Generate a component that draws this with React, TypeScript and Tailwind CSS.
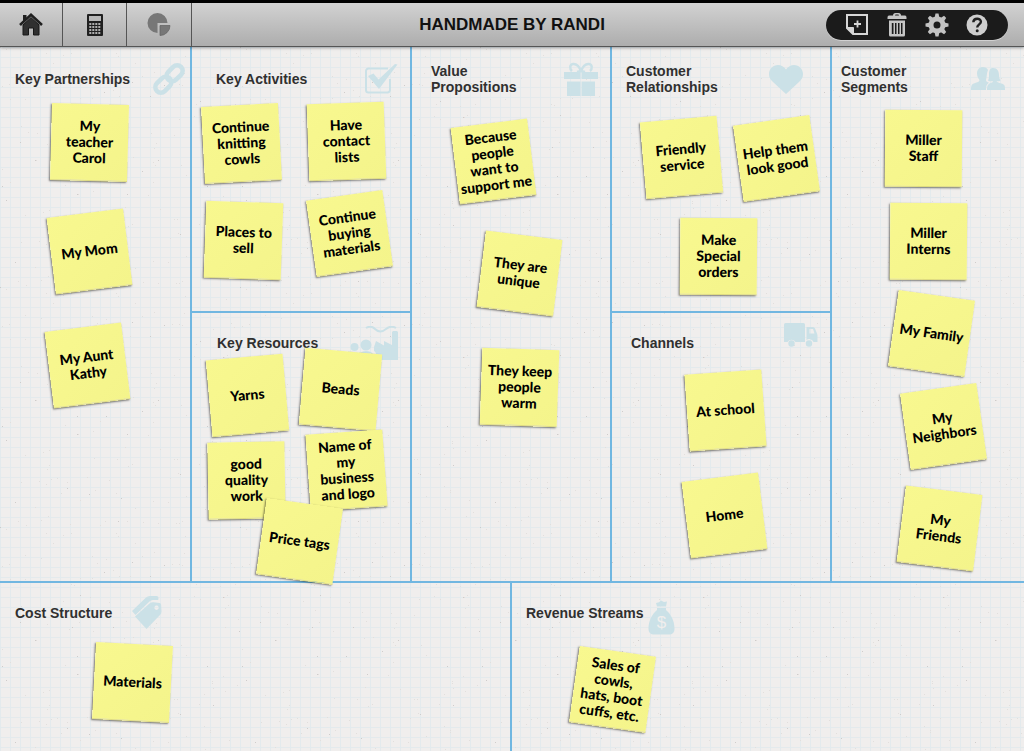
import type { ReactNode } from "react";

type Note = { text: string; x: number; y: number; rotate: number };

type Section = {
  title: string;
  className: string;
  headClass: string;
  icon: ReactNode;
  notes: Note[];
};

function LinkIcon() {
  return (
    <svg width="34" height="34" viewBox="0 0 34 34" fill="none" stroke="currentColor" strokeWidth="4.6">
      <g transform="rotate(-45 17 17)">
        <rect x="0" y="11.500" width="18" height="11" rx="5.500" />
        <rect x="16" y="11.500" width="18" height="11" rx="5.500" />
      </g>
    </svg>
  );
}

function CheckIcon() {
  return (
    <svg width="34" height="32" viewBox="0 0 34 32" fill="none">
      <path
        d="M24 5.500H4.500a2.500 2.500 0 0 0-2.500 2.500v19a2.500 2.500 0 0 0 2.500 2.500h19a2.500 2.500 0 0 0 2.500-2.500V16"
        stroke="currentColor"
        strokeWidth="2"
      />
      <path d="M4 13l5.500-2.500 5 6L31 1l2.500 .6L15 26z" fill="currentColor" />
    </svg>
  );
}

function GiftIcon() {
  return (
    <svg width="34" height="34" viewBox="0 0 34 34" fill="currentColor">
      <path d="M0 10h16.500v7H0zM17.500 10H34v7H17.500zM3 19.500h13.500V34H3zM17.500 19.500H31V34H17.500z" />
      <path
        d="M17 10C16 5 12.500 1.500 9 2C5.500 2.500 5.500 7 8 9M17 10C18 5 21.500 1.500 25 2C28.500 2.500 28.500 7 26 9M17 9l-4 1M17 9l4 1"
        fill="none"
        stroke="currentColor"
        strokeWidth="2.400"
      />
    </svg>
  );
}

function HeartIcon() {
  return (
    <svg width="34" height="29" viewBox="0 0 34 29" fill="currentColor">
      <path d="M17 4.500C15 1.500 12 0 9 0C4 0 0 4 0 9c0 3.500 1.500 5.500 4 8l13 12 13-12c2.500-2.500 4-4.500 4-8 0-5-4-9-9-9-3 0-6 1.500-8 4.500z" />
    </svg>
  );
}

function PeopleIcon() {
  return (
    <svg width="34" height="24" viewBox="0 0 34 24" fill="currentColor">
      <path d="M6 6.500C6 2.500 8.500 0 12 0c2.500 0 4 1 5 3-1.500 3-1 7-2 10 0 1.500 1.500 2 3 2.700-2.500 1.300-3 3.500-3 7.300H0c0-5 1-6 4-7 2-.7 4.500-1.200 4.500-3C7 11 6 9 6 6.500z" />
      <path d="M22 1c4.500 0 6 3.500 6 7 0 2.500.5 4 1.500 5.500-1 .8-2.500 1-4 .8.500 1.700 7 2 8 4.200.5 1.200.5 3 .5 4.500H16c0-6 2-6.500 5-7.500.7-.3 1-.7 1-1.200-2 .2-4 0-5-.8 1.200-2 1-4 1-6C18 3.500 19 1 22 1z" />
    </svg>
  );
}

function FactoryIcon() {
  return (
    <svg width="48" height="34" viewBox="0 0 48 34" fill="currentColor">
      <path d="M24 21l2-6 8 4.500V15l8 4V6l1-1h4l1 1v28H27c0-4-1-8-3-9z" />
      <circle cx="16" cy="19" r="5.500" />
      <circle cx="4.500" cy="21" r="4" />
      <path d="M0 34v-6c1-2 7-2.500 9-1l1 1c1-4 11-4 13 0 1.500 1.500 2 4 2 6z" />
      <path d="M16 2q5-3 9 1q5 5 11 0q5-4 10-1" fill="none" stroke="currentColor" strokeWidth="2" />
    </svg>
  );
}

function TruckIcon() {
  return (
    <svg width="34" height="24" viewBox="0 0 34 24" fill="currentColor">
      <path d="M1.500 0h18q1.500 0 1.500 1.500V19h-9.500a4.600 4.600 0 0 0-8 0H0V1.500Q0 0 1.500 0z" />
      <path
        fillRule="evenodd"
        d="M22.500 4H29q1.500 0 2 1.500l2 5q.5 1 .5 2.500v6h-4a4.600 4.600 0 0 0-7-2zM25.500 6v4.500H30.500L29 6z"
      />
      <circle cx="7.500" cy="20.500" r="3.200" />
      <circle cx="25" cy="20.500" r="3.200" />
    </svg>
  );
}

function TagsIcon() {
  return (
    <svg width="30" height="34" viewBox="0 0 30 34" fill="currentColor">
      <path d="M0 15L14 1.500Q15.500 0 18 0h6.500q2 0 2 2l-.3 2H21q-2 0-3.500 1.500L3.500 19z" />
      <path
        fillRule="evenodd"
        d="M3 20.500L17.500 7.500Q19.500 6 21.500 6.300l6 .7q1.500.2 1.600 1.500l.4 7q0 2-1.500 3.500L14.500 33zM24.500 9.500a2.200 2.200 0 1 0 .1 0z"
      />
    </svg>
  );
}

function MoneyBagIcon() {
  return (
    <svg width="27" height="35" viewBox="0 0 27 35" fill="currentColor">
      <path d="M8 3l3-.7L13 .5l3 1.500 3-.5-1 5H9z" />
      <path d="M9 8h9v2c5 4 8.500 11 8.500 18.500 0 4-2 6-6 6H6.500c-4 0-6-2-6-6C.5 21 4 14 9 10z" />
      <text
        x="13.500"
        y="28"
        textAnchor="middle"
        className="fill-[#f0eeed] font-['Liberation_Sans',sans-serif] text-[17px]"
      >
        $
      </text>
    </svg>
  );
}

function HomeIcon() {
  return (
    <svg width="24" height="23" viewBox="0 0 24 23">
      <path d="M4 12l8-7.500 8 7.500v10h-5.500v-7h-5v7H4z" fill="#303030" stroke="#181818" />
      <path d="M1 12L12 1.800 23 12" fill="none" stroke="#202020" strokeWidth="2.600" />
      <path d="M4 2h3.500v4L4 9z" fill="#202020" />
    </svg>
  );
}

function CalculatorIcon() {
  return (
    <svg width="16" height="22" viewBox="0 0 16 22">
      <rect width="16" height="22" rx="1" fill="#202020" />
      <rect x="2" y="2" width="12" height="5" fill="#b8b8b8" />
      {[9, 12, 15, 18].map((y) =>
        [2, 5, 8, 11].map((x) => (
          <rect key={`${x}-${y}`} x={x + 0.3} y={y} width="2" height="2" fill="#b0b0b0" />
        ))
      )}
    </svg>
  );
}

function PieIcon() {
  return (
    <svg width="24" height="23" viewBox="0 0 24 23" fill="#777">
      <path d="M10.500 0a10 10 0 1 0 0 20V10h10A10 10 0 0 0 10.500 0z" />
      <path d="M13 12.500h10a10 10 0 0 1-10 10z" stroke="#606060" strokeWidth=".7" />
    </svg>
  );
}

function AddNoteIcon() {
  return (
    <svg width="24" height="24" viewBox="0 0 24 24" fill="none" stroke="#d6d6d6">
      <path d="M2 2h20v19H8l-6-6z" strokeWidth="2" />
      <path d="M2 14.500h6.500V21z" fill="#d6d6d6" />
      <path d="M12.500 7.500v7M9 11h7" strokeWidth="1.800" />
    </svg>
  );
}

function TrashIcon() {
  return (
    <svg width="20" height="24" viewBox="0 0 20 24" fill="#c6c6c6">
      <path
        fillRule="evenodd"
        d="M6 2.500Q6 0 8.500 0h3Q14 0 14 2.500h4q1.500 0 1.500 2V6H.5V4.500q0-2 1.500-2zM8 2.500h4q0-1-1-1H9q-1 0-1 1z"
      />
      <path
        fillRule="evenodd"
        d="M2 7.500h16V22q0 1.500-1.500 1.500h-13Q2 23.500 2 22zM4.800 10v11h1.700V10zM8 10v11h1.500V10zM11 10v11h1.500V10zM14 10v11h1.500V10z"
      />
    </svg>
  );
}

function GearIcon() {
  return (
    <svg width="24" height="24" viewBox="0 0 24 24" fill="#c2c2c2">
      {[0, 45, 90, 135, 180, 225, 270, 315].map((angle) => (
        <path key={angle} d="M9.500 5L10.500.5h3L14.500 5z" transform={`rotate(${angle} 12 12)`} />
      ))}
      <circle cx="12" cy="12" r="6" fill="none" stroke="#c2c2c2" strokeWidth="5" />
    </svg>
  );
}

function HelpIcon() {
  return (
    <svg width="22" height="22" viewBox="0 0 22 22">
      <circle cx="11" cy="11" r="10.500" fill="#cecece" />
      <path
        d="M7.300 8.300c.2-4.800 7.600-4.500 7.600-.6 0 2.600-3.700 2.700-3.700 5.800"
        fill="none"
        stroke="#202020"
        strokeWidth="2.400"
      />
      <circle cx="11.200" cy="16.700" r="1.500" fill="#202020" />
    </svg>
  );
}

const topSections: Section[] = [
  {
    title: "Key Partnerships",
    className: "row-span-2 border-r-2",
    headClass: "pt-4 pl-[15px] pr-1",
    icon: <LinkIcon />,
    notes: [
      { text: "My\nteacher\nCarol", x: 90, y: 96, rotate: 1.5 },
      { text: "My Mom", x: 90, y: 205, rotate: -7 },
      { text: "My Aunt\nKathy", x: 88, y: 319, rotate: -7 },
    ],
  },
  {
    title: "Key Activities",
    className: "border-r-2 border-b-2",
    headClass: "pt-4 pl-6 pr-3",
    icon: <CheckIcon />,
    notes: [
      { text: "Continue\nknitting\ncowls", x: 50, y: 97, rotate: -3 },
      { text: "Have\ncontact\nlists", x: 155, y: 95, rotate: -2 },
      { text: "Places to\nsell", x: 52, y: 194, rotate: 2 },
      { text: "Continue\nbuying\nmaterials", x: 158, y: 187, rotate: -8 },
    ],
  },
  {
    title: "Value\nPropositions",
    className: "row-span-2 border-r-2",
    headClass: "pt-4 pl-[19px] pr-3",
    icon: <GiftIcon />,
    notes: [
      { text: "Because\npeople\nwant to\nsupport me", x: 82, y: 115, rotate: -7 },
      { text: "They are\nunique", x: 108, y: 227, rotate: 7 },
      { text: "They keep\npeople\nwarm", x: 108, y: 341, rotate: 2 },
    ],
  },
  {
    title: "Customer\nRelationships",
    className: "border-r-2 border-b-2",
    headClass: "pt-4 pl-[14px] pr-[27px]",
    icon: <HeartIcon />,
    notes: [
      { text: "Friendly\nservice", x: 70, y: 111, rotate: -5 },
      { text: "Help them\nlook good", x: 165, y: 112, rotate: -8 },
      { text: "Make\nSpecial\norders", x: 107, y: 210, rotate: 0.5 },
    ],
  },
  {
    title: "Customer\nSegments",
    className: "row-span-2",
    headClass: "pt-4 pl-[9px] pr-[19px]",
    icon: <PeopleIcon />,
    notes: [
      { text: "Miller\nStaff", x: 92, y: 102, rotate: 0.5 },
      { text: "Miller\nInterns", x: 97, y: 195, rotate: 0.5 },
      { text: "My Family", x: 100, y: 287, rotate: 8 },
      { text: "My\nNeighbors", x: 112, y: 380, rotate: -8 },
      { text: "My\nFriends", x: 108, y: 482, rotate: 7 },
    ],
  },
  {
    title: "Key Resources",
    className: "border-r-2",
    headClass: "pt-[14px] pl-[25px] pr-3",
    icon: <FactoryIcon />,
    notes: [
      { text: "Yarns", x: 56, y: 83, rotate: -5 },
      { text: "Beads", x: 149, y: 77, rotate: 5 },
      { text: "good\nquality\nwork", x: 55, y: 168, rotate: -1 },
      { text: "Name of\nmy\nbusiness\nand logo", x: 155, y: 158, rotate: -4 },
      { text: "Price tags", x: 108, y: 229, rotate: 8 },
    ],
  },
  {
    title: "Channels",
    className: "border-r-2",
    headClass: "pt-[14px] pl-[19px] pr-3 [&>span]:-mt-2",
    icon: <TruckIcon />,
    notes: [
      { text: "At school", x: 114, y: 98, rotate: -4 },
      { text: "Home", x: 113, y: 203, rotate: -7 },
    ],
  },
];

const bottomSections: Section[] = [
  {
    title: "Cost Structure",
    className: "border-r-2",
    headClass: "pt-[14px] pl-[15px] gap-5 justify-start!",
    icon: <TagsIcon />,
    notes: [{ text: "Materials", x: 133, y: 100, rotate: 3 }],
  },
  {
    title: "Revenue Streams",
    className: "",
    headClass: "pt-[14px] pl-[14px] gap-1 justify-start! [&>span]:mt-1",
    icon: <MoneyBagIcon />,
    notes: [{ text: "Sales of\ncowls,\nhats, boot\ncuffs, etc.", x: 101, y: 107, rotate: 8 }],
  },
];

function StickyNote({ note }: { note: Note }) {
  return (
    <div
      className="absolute z-10 -mt-[39px] -ml-[39px] flex size-[77px] items-center justify-center border-b border-[#dfdc80] bg-linear-to-br from-[#f8f88f] to-[#f4f48b] text-center font-['Lato',sans-serif] text-sm/4 font-black whitespace-pre text-black shadow-[-1px_1px_2px_rgba(0,0,0,0.5)]"
      style={{ left: note.x, top: note.y, transform: `rotate(${note.rotate}deg)` }}
    >
      {note.text}
    </div>
  );
}

function CanvasSection({ section }: { section: Section }) {
  return (
    <section className={`relative border-[#71b7e1] ${section.className}`}>
      <div className={`flex justify-between ${section.headClass}`}>
        <h2 className="flex h-8 items-center text-sm/4 font-bold whitespace-pre text-[#303030]">
          {section.title}
        </h2>
        <span className="flex h-8 items-center text-[#cbe1e7]">{section.icon}</span>
      </div>
      {section.notes.map((note) => (
        <StickyNote key={note.text} note={note} />
      ))}
    </section>
  );
}

// scattered specks of the paper, same every time
const specks = Array.from({ length: 170 }, (_, i) => ({
  x: (i * 73 + ((i * i * 17) % 61)) % 240,
  y: (i * 41 + ((i * i * 29) % 83)) % 240,
  strong: i % 6 === 0,
}));

function PaperTexture() {
  return (
    <svg aria-hidden="true" className="pointer-events-none absolute inset-0 size-full">
      <defs>
        <pattern id="specks" width="240" height="240" patternUnits="userSpaceOnUse">
          {specks.map((s, i) => (
            <rect key={i} x={s.x} y={s.y} width="1" height="1" fill={s.strong ? "#cfcccb" : "#e2dfdd"} />
          ))}
        </pattern>
      </defs>
      <rect width="100%" height="100%" fill="url(#specks)" />
    </svg>
  );
}

export default function App() {
  return (
    <div className="flex min-h-screen flex-col bg-[#f0eeed] font-['Liberation_Sans',Arial,sans-serif]">
      <header className="relative z-20 grid h-[47px] shrink-0 grid-cols-[1fr_auto_1fr] items-center border-t-3 border-b border-t-black border-b-[#555] bg-linear-to-b from-[#d2d2d2] to-[#adadad] shadow-[0_1px_3px_rgba(0,0,0,0.35)]">
        <nav className="flex h-full">
          <button aria-label="Home" className="flex w-[63px] items-center justify-center border-r border-[#555]">
            <HomeIcon />
          </button>
          <button aria-label="Calculator" className="flex w-16 items-center justify-center border-r border-[#555]">
            <CalculatorIcon />
          </button>
          <button aria-label="Chart" className="flex w-[65px] items-center justify-center border-r border-[#555]">
            <PieIcon />
          </button>
        </nav>
        <h1 className="pt-px text-[17px] font-bold text-[#111]">HANDMADE BY RANDI</h1>
        <div className="mr-4 flex h-[30px] items-center justify-self-end rounded-full bg-[#1b1b1b] px-[11px] shadow-[0_1px_0_rgba(255,255,255,0.4)]">
          <button aria-label="Add note" className="flex w-10 justify-center">
            <AddNoteIcon />
          </button>
          <button aria-label="Delete" className="flex w-10 justify-center">
            <TrashIcon />
          </button>
          <button aria-label="Settings" className="flex w-10 justify-center">
            <GearIcon />
          </button>
          <button aria-label="Help" className="flex w-10 justify-center">
            <HelpIcon />
          </button>
        </div>
      </header>
      <main className="relative grid grow grid-rows-[536fr_168fr] bg-[linear-gradient(to_right,#e3eaed_1px,transparent_1px),linear-gradient(to_bottom,#e3eaed_1px,transparent_1px)] bg-size-[10px_10px]">
        <PaperTexture />
        <div className="relative grid grid-cols-[192fr_220fr_200fr_220fr_192fr] grid-rows-[266fr_268fr] border-b-2 border-[#71b7e1]">
          {topSections.map((section) => (
            <CanvasSection key={section.title} section={section} />
          ))}
        </div>
        <div className="relative grid grid-cols-2">
          {bottomSections.map((section) => (
            <CanvasSection key={section.title} section={section} />
          ))}
        </div>
      </main>
    </div>
  );
}
